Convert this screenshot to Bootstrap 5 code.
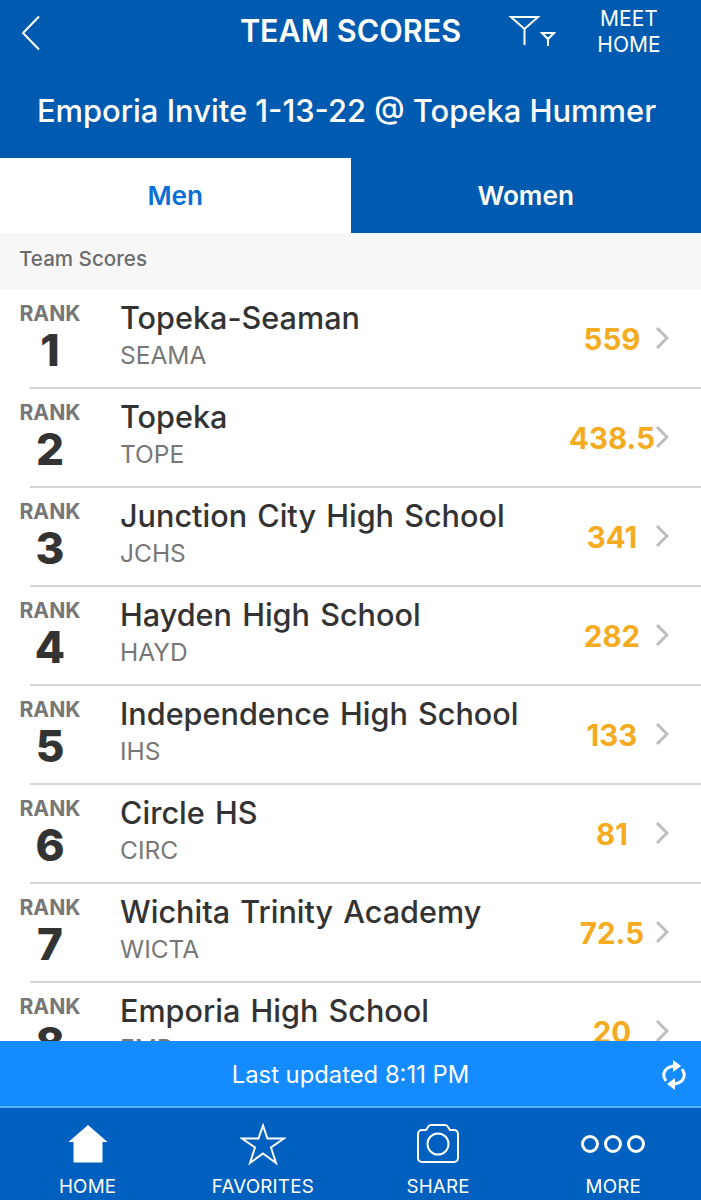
<!DOCTYPE html>
<html lang="en">
<head>
    <meta charset="UTF-8">
    <meta name="viewport" content="width=device-width, initial-scale=1.0">
    <title>Team Scores</title>
    <link href="https://cdn.jsdelivr.net/npm/bootstrap@5.3.0/dist/css/bootstrap.min.css" rel="stylesheet">
    <style>
        body { font-family: Inter, Lato, sans-serif; background: #fff; }
        .app-screen { height: 1200px; overflow: hidden; }
        .head-blue { background: #005bb0; color: #fff; }
        .top-row { height: 66px; padding: 0 39px 0 20px; }
        .top-title { font-size: 30.600px; font-weight: 600; left: 0; right: 0; top: 13px; text-align: center; line-height: 36px; }
        .funnel-icon { margin-top: -4px; }
        .meet-home { font-size: 21px; line-height: 26px; text-align: center; width: 66px; margin: -2px 0 0 40px; }
        .meet-name { font-size: 30.900px; font-weight: 500; text-align: center; height: 92px; padding: 21px 8px 0 0; line-height: 48px; white-space: nowrap; }
        .tab-item { height: 75px; font-size: 26.200px; font-weight: 600; line-height: 76px; text-align: center; width: 50%; }
        .tab-on { background: #fff; color: #0a6fd6; }
        .tab-off { background: #005bb0; color: #fff; }
        .section-head { height: 56px; background: #f7f7f7; color: #6b6b6b; font-size: 20.600px; font-weight: 500; line-height: 51px; padding-left: 19px; }
        .score-list { flex: 1 1 0; min-height: 0; overflow: hidden; }
        .score-row { height: 99px; }
        .rank-box { width: 100px; text-align: center; padding-top: 10px; }
        .rank-word { font-size: 21.200px; font-weight: 700; color: #777; line-height: 28px; }
        .rank-num { font-size: 44px; font-weight: 800; color: #333; line-height: 44px; margin-top: 1px; }
        .team-box { flex: 1 1 0; border-bottom: 2px solid #d4d4d4; margin-left: -70px; padding-left: 90px; padding-top: 8px; height: 100px; display: flex; }
        .team-name { font-size: 30.600px; font-weight: 500; color: #333; line-height: 42px; word-spacing: 2px; }
        .team-code { font-size: 24.500px; color: #777; line-height: 33px; }
        .team-score { width: 90px; text-align: center; font-size: 29.500px; font-weight: 700; color: #f5ab1f; line-height: 84px; margin-left: auto; }
        .row-arrow { width: 14px; margin: 29px 32px 0 -2px; flex: none; }
        .update-bar { height: 67px; background: #148cff; color: #fff; font-size: 23.800px; line-height: 68px; text-align: center; border-bottom: 2px solid #5aaeff; }
        .update-icon { right: 15px; top: 19px; }
        .nav-bar { height: 92px; background: #0060c0; color: #fff; }
        .nav-item-box { width: 175.250px; text-align: center; font-size: 18.800px; letter-spacing: .2px; }
        .nav-icon { height: 60px; padding-top: 15px; }
        .nav-label { line-height: 22px; margin-top: 8px; }
    </style>
</head>
<body>
<div class="app-screen d-flex flex-column">
    <div class="head-blue">
        <div class="top-row d-flex align-items-center position-relative">
            <svg width="22" height="36" viewBox="0 0 22 36" fill="none" stroke="#fff" stroke-width="2"><path d="M19 1.500 3 18l16 16.500"/></svg>
            <div class="top-title position-absolute">TEAM SCORES</div>
            <svg class="funnel-icon ms-auto" width="48" height="32" viewBox="0 0 48 32" fill="none" stroke="#fff" stroke-width="2"><path d="M3 2h27L16.500 14zM16.500 14v16"/><path d="M34 18h12l-6 6zM40 24v7"/></svg>
            <div class="meet-home">MEET HOME</div>
        </div>
        <div class="meet-name">Emporia Invite 1-13-22 @ Topeka Hummer</div>
    </div>

    <div class="d-flex">
        <div class="tab-item tab-on">Men</div>
        <div class="tab-item tab-off">Women</div>
    </div>

    <div class="section-head">Team Scores</div>

    <div class="score-list" id="score-list"></div>

    <div class="update-bar position-relative">
        Last updated 8:11 PM
        <svg class="update-icon position-absolute" width="24" height="30" viewBox="0 0 24 30" fill="none" stroke="#fff" stroke-width="3"><path d="M4 21C-1 14 3 7 12 6"/><path d="M20 9C25 16 21 23 12 24"/><path d="M11 0l8 6-8 6z" fill="#fff" stroke="none"/><path d="M13 18l-8 6 8 6z" fill="#fff" stroke="none"/></svg>
    </div>

    <div class="nav-bar d-flex">
        <div class="nav-item-box">
            <div class="nav-icon"><svg width="40" height="40" viewBox="0 0 40 40" fill="#fff"><path d="M20 2 39.500 19H34.500V39.500H5.500V19H.5z"/></svg></div>
            <div class="nav-label">HOME</div>
        </div>
        <div class="nav-item-box">
            <div class="nav-icon"><svg width="46" height="42" viewBox="0 0 46 42" fill="none" stroke="#fff" stroke-width="2"><path d="M23 2.500 27.500 15.500H44L31 24.500 36 40 23 30.500 10 40 15 24.500 2 15.500H18.500z"/></svg></div>
            <div class="nav-label">FAVORITES</div>
        </div>
        <div class="nav-item-box">
            <div class="nav-icon"><svg width="42" height="42" viewBox="0 0 42 42" fill="none" stroke="#fff" stroke-width="2"><path d="M5 7h4l2-3q1-2 3-2h14q2 0 3 2l2 3h4a4 4 0 0 1 4 4v24a4 4 0 0 1-4 4H5a4 4 0 0 1-4-4V11a4 4 0 0 1 4-4z"/><circle cx="21" cy="21" r="10.500"/></svg></div>
            <div class="nav-label">SHARE</div>
        </div>
        <div class="nav-item-box">
            <div class="nav-icon"><svg width="64" height="42" viewBox="0 0 64 42" fill="none" stroke="#fff" stroke-width="3"><circle cx="9" cy="21" r="7.500"/><circle cx="32" cy="21" r="7.500"/><circle cx="55" cy="21" r="7.500"/></svg></div>
            <div class="nav-label">MORE</div>
        </div>
    </div>
</div>
<script>
    const teams = [
        ["Topeka-Seaman", "SEAMA", "559"],
        ["Topeka", "TOPE", "438.5"],
        ["Junction City High School", "JCHS", "341"],
        ["Hayden High School", "HAYD", "282"],
        ["Independence High School", "IHS", "133"],
        ["Circle HS", "CIRC", "81"],
        ["Wichita Trinity Academy", "WICTA", "72.5"],
        ["Emporia High School", "EMP", "20"]
    ];
    let html = "";
    teams.forEach((t, i) => {
        html += `<div class="score-row d-flex">
            <div class="rank-box"><div class="rank-word">RANK</div><div class="rank-num">${i + 1}</div></div>
            <div class="team-box">
                <div><div class="team-name">${t[0]}</div><div class="team-code">${t[1]}</div></div>
                <div class="team-score">${t[2]}</div>
                <svg class="row-arrow" height="24" viewBox="0 0 14 24" fill="none" stroke="#bdbdbd" stroke-width="3"><path d="M2 2l10 10L2 22"/></svg>
            </div>
        </div>`;
    });
    document.getElementById("score-list").innerHTML = html;
</script>
</body>
</html>
